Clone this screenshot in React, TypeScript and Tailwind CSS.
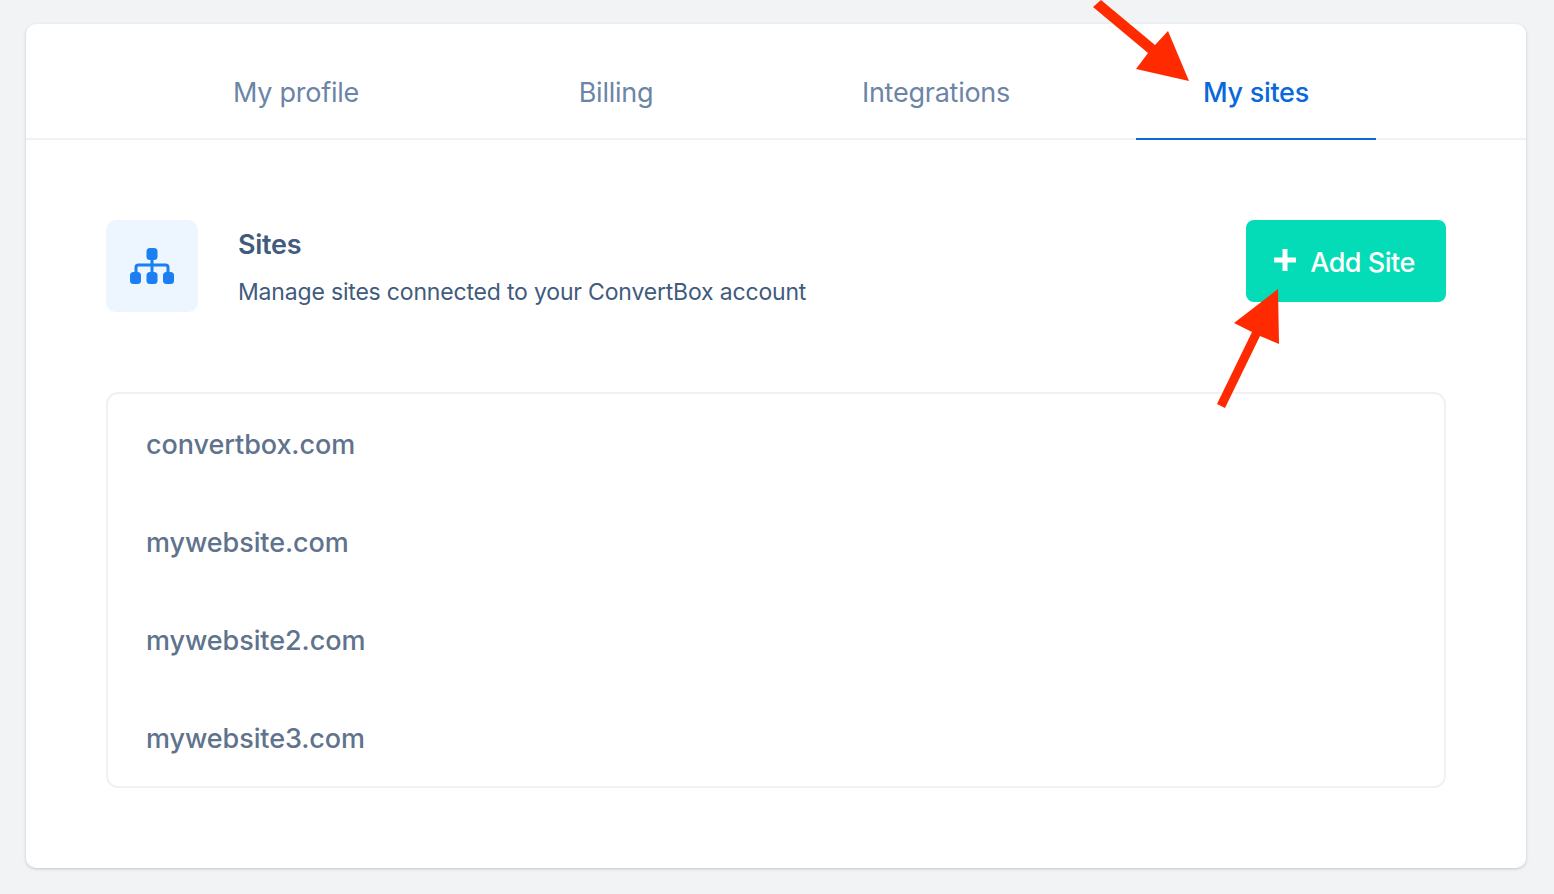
const tabs = ["My profile", "Billing", "Integrations", "My sites"];
const sites = ["convertbox.com", "mywebsite.com", "mywebsite2.com", "mywebsite3.com"];

function SitemapIcon() {
  return (
    <svg width="44" height="36" viewBox="0 0 44 36" fill="none">
      <path d="M22 10V25M6 25V19.5C6 18 7 17 8.5 17H35.5C37 17 38 18 38 19.5V25" stroke="#1a7ff0" strokeWidth="3" />
      <rect x="16.5" y="0" width="11" height="12" rx="3.5" fill="#1a7ff0" />
      <rect x="0" y="24" width="11" height="12" rx="3.5" fill="#1a7ff0" />
      <rect x="16.5" y="24" width="11" height="12" rx="3.5" fill="#1a7ff0" />
      <rect x="33" y="24" width="11" height="12" rx="3.5" fill="#1a7ff0" />
    </svg>
  );
}

export default function App() {
  return (
    <div className="relative h-[894px] overflow-hidden bg-[#f1f3f5] px-[26px] pt-[24px] font-['Inter',sans-serif] antialiased">
      <div className="h-[844px] w-[1500px] rounded-[10px] bg-white shadow-[0_1px_3px_rgba(80,95,125,0.3)]">
        {/* tabs */}
        <div className="flex h-[116px] justify-center gap-[80px] border-b-2 border-[#eff1f3]">
          {tabs.map((tab) => (
            <div
              key={tab}
              className={
                tab === "My sites"
                  ? "-mb-[2px] flex h-[116px] w-[240px] items-center justify-center border-b-2 border-[#0a69da] pt-[24px] text-[27px] font-medium tracking-[-0.3px] text-[#0a69da]"
                  : "flex h-[114px] w-[240px] items-center justify-center pt-[24px] text-[27px] tracking-[-0.25px] text-[#6c85a6]"
              }
            >
              {tab}
            </div>
          ))}
        </div>

        <div className="px-[80px] pt-[80px]">
          {/* header */}
          <div className="flex items-start justify-between">
            <div className="flex">
              <div className="flex h-[92px] w-[92px] items-center justify-center rounded-[10px] bg-[#edf5fe]">
                <SitemapIcon />
              </div>
              <div className="ml-[40px]">
                <div className="mt-[7px] text-[27px] leading-[36px] font-semibold tracking-[-0.3px] text-[#3f5b7d]">Sites</div>
                <div className="mt-[11px] text-[23px] leading-[36px] tracking-[-0.18px] text-[#3f5b7d]">
                  Manage sites connected to your ConvertBox account
                </div>
              </div>
            </div>
            <button className="flex h-[82px] w-[200px] items-center justify-center gap-[14px] rounded-[8px] bg-[#04dcb7] pt-[4px] pr-[3px] text-[27px] font-medium tracking-[-0.5px] text-white">
              <svg width="22" height="22" viewBox="0 0 22 22" className="-mt-[6px]">
                <path d="M11 0V22M0 11H22" stroke="white" strokeWidth="5" />
              </svg>
              Add Site
            </button>
          </div>

          {/* list */}
          <div className="mt-[80px] h-[396px] rounded-[12px] border-2 border-[#eff1f4] px-[38px] pt-[2px]">
            {sites.map((site) => (
              <div key={site} className="flex h-[98px] items-center text-[27px] font-medium tracking-[-0.08px] text-[#5f738c]">
                {site}
              </div>
            ))}
          </div>
        </div>
      </div>

      {/* annotation arrows */}
      <svg className="pointer-events-none absolute top-0 left-0" width="1554" height="894">
        <polygon points="1093,7 1101,0 1155,45 1168,31 1189,81 1136,69 1148,53" fill="#ff2a00" />
        <polygon points="1278,289 1279,344 1260,336 1225,408 1217,404 1252,332 1234,323" fill="#ff2a00" />
      </svg>
    </div>
  );
}
